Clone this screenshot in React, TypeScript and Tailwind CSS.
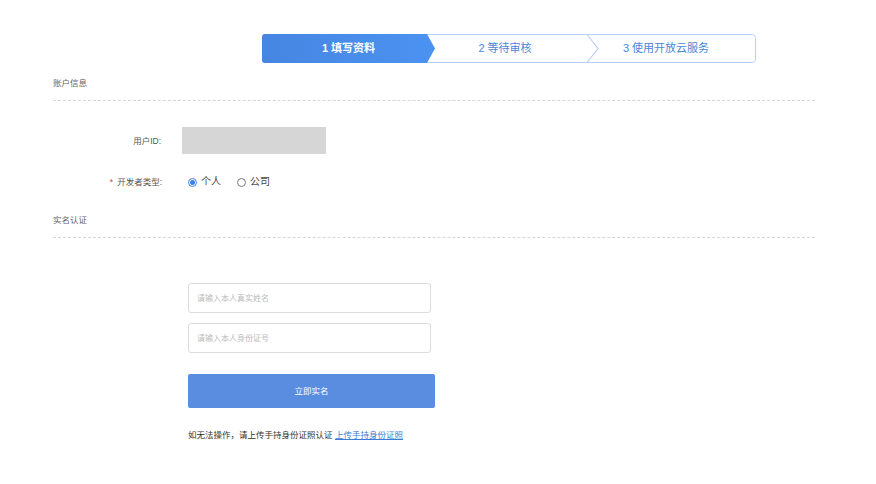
import { useState } from "react";

const steps = [
  { label: "1 填写资料", cls: "w-[173px] text-white font-bold" },
  { label: "2 等待审核", cls: "w-[152px] pr-[12px] text-[#4a86d6]" },
  { label: "3 使用开放云服务", cls: "flex-1 pr-[11px] text-[#4a86d6]" },
];

const StepBar = () => (
  <div className="relative w-[494px] h-[29px] flex">
    <svg className="absolute inset-0" width="494" height="29" viewBox="0 0 494 29">
      <defs>
        <linearGradient id="stepGrad" x1="0" x2="1" y1="0" y2="0">
          <stop offset="0" stopColor="#4686e2" />
          <stop offset="1" stopColor="#4c92f0" />
        </linearGradient>
      </defs>
      <rect x="0.5" y="0.5" width="493" height="28" rx="3" fill="#fff" stroke="#b7cff4" />
      <path d="M3 0 H165 L173 14.5 L165 29 H3 Q0 29 0 26 V3 Q0 0 3 0 Z" fill="url(#stepGrad)" />
      <polyline points="325,0.5 336,14.5 325,28.5" fill="none" stroke="#b7cff4" strokeWidth="1.2" />
    </svg>
    {steps.map((s) => (
      <div key={s.label} className={`relative flex items-center justify-center text-[11px] ${s.cls}`}>
        {s.label}
      </div>
    ))}
  </div>
);

const Radio = ({ checked, label, onClick }: { checked: boolean; label: string; onClick: () => void }) => (
  <button onClick={onClick} className="flex items-center gap-[4px] text-[10px] text-[#444]">
    <span
      className={`w-[9px] h-[9px] rounded-full border flex items-center justify-center ${
        checked ? "border-[#3f7fe0]" : "border-[#777]"
      }`}
    >
      {checked && <span className="w-[5px] h-[5px] rounded-full bg-[#3f7fe0]" />}
    </span>
    {label}
  </button>
);

export default function App() {
  const [type, setType] = useState("personal");

  return (
    <div className="w-[876px] h-[484px] bg-white font-['Liberation_Sans','Noto_Sans_CJK_SC',sans-serif]">
      <div className="pt-[34px] pl-[262px]">
        <StepBar />
      </div>

      <div className="ml-[53px] w-[762px] text-[8.5px] leading-[12px] text-[#555]">
        {/* 账户信息 */}
        <div className="mt-[14px] text-[#666]">账户信息</div>
        <div className="mt-[11px] border-t border-dashed border-[#d6d6d6]" />

        <div className="mt-[26px] flex items-center">
          <div className="w-[108px] text-right">用户ID:</div>
          <div className="ml-[21px] w-[144px] h-[27px] bg-[#d6d6d6]" />
        </div>

        <div className="mt-[18px] h-[20px] flex items-center">
          <div className="w-[109px] text-right">
            <span className="text-[#e04040] mr-[4px]">*</span>开发者类型:
          </div>
          <div className="ml-[26px] flex items-center gap-[16px]">
            <Radio checked={type === "personal"} label="个人" onClick={() => setType("personal")} />
            <Radio checked={type === "company"} label="公司" onClick={() => setType("company")} />
          </div>
        </div>

        {/* 实名认证 */}
        <div className="mt-[22px] text-[#666]">实名认证</div>
        <div className="mt-[11px] border-t border-dashed border-[#d6d6d6]" />

        <div className="ml-[135px]">
          <input
            className="mt-[45px] block w-[243px] h-[30px] rounded-[3px] border border-[#dcdcdc] px-[8px] text-[8px] outline-none placeholder:text-[#bbbbbb]"
            placeholder="请输入本人真实姓名"
          />
          <input
            className="mt-[10px] block w-[243px] h-[30px] rounded-[3px] border border-[#dcdcdc] px-[8px] text-[8px] outline-none placeholder:text-[#bbbbbb]"
            placeholder="请输入本人身份证号"
          />
          <button className="mt-[21px] block w-[247px] h-[34px] rounded-[2px] bg-[#5a8de0] text-white text-[8.5px]">
            立即实名
          </button>
          <div className="mt-[21px] text-[#333]">
            如无法操作，请上传手持身份证照认证{" "}
            <a href="#" className="text-[#3a7bdc] underline">
              上传手持身份证照
            </a>
          </div>
        </div>
      </div>
    </div>
  );
}
